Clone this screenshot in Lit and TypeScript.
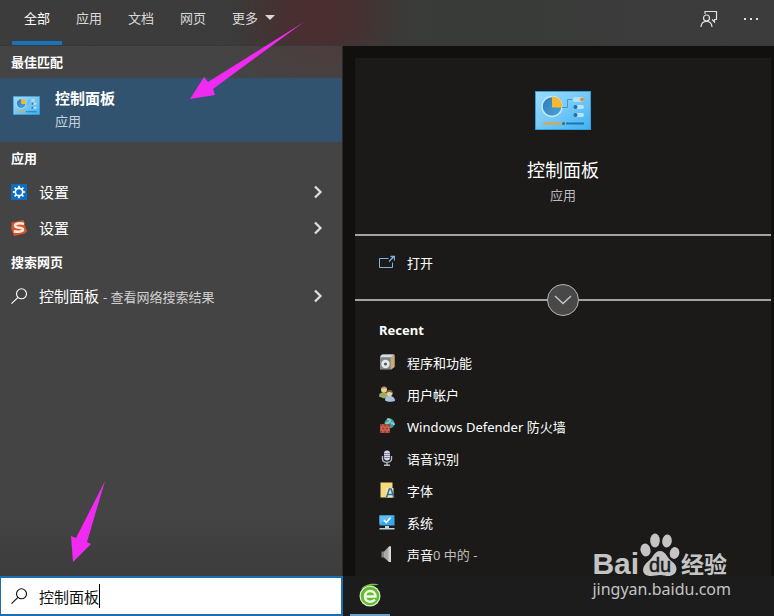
import { LitElement, html, css, svg } from "lit";
import { customElement, state } from "lit/decorators.js";

const panelIcon = svg`
  <defs>
    <linearGradient id="screen" x1="0" y1="0" x2="1" y2="1">
      <stop offset="0" stop-color="#9adcfb"/><stop offset="0.4" stop-color="#7fcdf8"/><stop offset="1" stop-color="#3fb2ef"/>
    </linearGradient>
    <linearGradient id="pie" x1="0" y1="0" x2="1" y2="1">
      <stop offset="0" stop-color="#2b7cb4"/><stop offset="1" stop-color="#4ea3dc"/>
    </linearGradient>
  </defs>
  <rect x="0.5" y="0.5" width="55" height="38" fill="url(#screen)" stroke="#2f9fe0"/>
  <circle cx="17" cy="15.5" r="10" fill="url(#pie)" stroke="#c6ebfc" stroke-width="1.4"/>
  <path d="M17 5.500A10.500 10.500 0 0 1 27.500 16.500H17z" fill="#f7b731"/>
  <path d="M27 16.500h5.500V8.500H37" fill="none" stroke="#3a9fd0" stroke-width="1"/>
  <rect x="38" y="6" width="11" height="5" rx="2" fill="#b5dff4"/><circle cx="47" cy="8.500" r="2" fill="#e08a4a"/>
  <rect x="39" y="14" width="10" height="4" rx="2" fill="#b5e3f8"/><circle cx="40.500" cy="16" r="2" fill="#1c6fa8"/>
  <rect x="39" y="22" width="10" height="4" rx="2" fill="#b5e3f8"/><circle cx="40.500" cy="24" r="2" fill="#1c6fa8"/>
  <path d="M8 32.500h19" stroke="#e8a33a" stroke-width="2"/>
  <path d="M31 32.500h18" stroke="#1c74b8" stroke-width="2"/>
  <circle cx="28.500" cy="32.500" r="1.500" fill="#1c6fa8"/>`;

const settingsIcon = svg`
  <rect width="16" height="16" fill="#0a70c4"/>
  <g stroke="#fff" stroke-width="1.700" fill="none">
    <circle cx="8" cy="8" r="3.700"/>
    <path d="M8 1.800v2.500M8 11.700v2.500M1.800 8h2.500M11.700 8h2.500M3.600 3.600l1.800 1.800M10.600 10.600l1.800 1.800M12.400 3.600l-1.800 1.800M5.400 10.600l-1.800 1.800"/>
  </g>`;

const sogouIcon = svg`
  <path d="M0.500 2.500L12.500 0L13.500 4L16 11.500L13.500 13.500L3 16L0.300 9z" fill="#d9532c"/>
  <path d="M13 4C9 2.600 3.800 3.200 4 6C4.200 8.600 12 7 12 9.400C12 11.600 7 12.200 2.800 11.200" fill="none" stroke="#ffe9dc" stroke-width="2.500"/>`;

const searchIcon = svg`
  <circle cx="10.500" cy="5.800" r="5" fill="none" stroke="currentColor" stroke-width="1.100"/>
  <path d="M7 9.400L0.500 15.600" stroke="currentColor" stroke-width="1.100"/>`;

const openIcon = svg`
  <path d="M9.500 3.500H0.500v9h13V7.500" fill="none" stroke="#7fb4e2"/>
  <path d="M10 6.500L14.800 1.800M11.500 1.500h4v4" fill="none" stroke="#7fb4e2" stroke-width="1.300"/>`;

const chevron = svg`<path d="M2 1.500L7.500 7L2 12.500" fill="none" stroke="#e0e0e0" stroke-width="2.200"/>`;

const recentIcons = {
  programs: svg`
    <path d="M1 2L3 0.500H15.500V13L12 15.500H1z" fill="#8f989a"/>
    <path d="M2 1.500L4 0.500H15L12 3H2z" fill="#d9dddb"/>
    <path d="M12 3L15.500 1V13L12 15.500z" fill="#d0a772"/>
    <rect x="1.500" y="4" width="10" height="11" fill="#7d888b"/>
    <circle cx="6.500" cy="10" r="4.200" fill="#e6eaea"/><circle cx="6.500" cy="10" r="1.500" fill="#4c5659"/>`,
  users: svg`
    <path d="M0 10.500C0 7 2 6.500 4.500 6.500S9 7.500 9 11L5 12.500z" fill="#9aab62"/>
    <circle cx="5" cy="3.800" r="3" fill="#e8cf96"/><path d="M2 3.500C2 -0.500 8 -0.500 8 3C6 2 4 2 2 3.500" fill="#b29555"/>
    <path d="M6 14.500C6 10.500 8 10 10.800 10S16 11.500 16 15C13 16.300 8.500 16 6 14.500" fill="#a9bfdf"/>
    <circle cx="10.500" cy="7.200" r="3" fill="#ead2a0"/><path d="M7.500 7C7.500 3 13.500 3 13.500 7C11 5.500 9.500 5.500 7.500 7" fill="#7a5c35"/>`,
  firewall: svg`
    <circle cx="10.500" cy="5.500" r="5" fill="#3c94c8"/>
    <path d="M8 1.500C11 0.500 12 2.500 10.500 4S7.500 5.500 6.500 5M12 5.500c2-1 3 0 3 1.500" stroke="#8fd29a" stroke-width="2" fill="none"/>
    <rect x="1" y="6" width="10" height="9" fill="#a63f2e"/>
    <path d="M1 9h10M1 12h10M4 6v3M8 6v3M2.500 9v3M6 9v3M9.500 9v3M4 12v3M8 12v3" stroke="#d9917f" stroke-width="0.600"/>`,
  speech: svg`
    <rect x="5" y="0.500" width="6" height="10" rx="3" fill="#d3d7e6"/>
    <path d="M5 3.500h6M5 5.500h6M5 7.500h6" stroke="#6a708c" stroke-width="0.800"/>
    <path d="M3.500 6V9C3.500 13.500 12.500 13.500 12.500 9V6M8 12.500V15M5 15.200h6" fill="none" stroke="#b4bacd" stroke-width="1.400"/>`,
  fonts: svg`
    <path d="M1.500 0.500h12v15h-12z" fill="#f5d97c"/><path d="M7 6h7.500v9.500H7z" fill="#f3e7b6"/>
    <path d="M7.500 15.500L10.300 7h1.800L15 15.500M8.700 12.500h5" fill="none" stroke="#2d6f9e" stroke-width="1.600"/>`,
  system: svg`
    <rect x="0.500" y="1.500" width="15" height="10" fill="#38a6ea"/><path d="M0.500 1.500H15.500L0.500 10z" fill="#5cbdf4"/>
    <path d="M5 6l2.300 2.500L11.500 3.800" fill="none" stroke="#fff" stroke-width="1.700"/>
    <path d="M6 12h4v2h5.500v1.500H0.500V14H6z" fill="#c4d2da"/>`,
  sound: svg`
    <path d="M2.500 5.500H5v6H2.500z" fill="#858585"/><path d="M5 5.500L10 0.500H12V16H10L5 11.500z" fill="#a9a9a9"/>
    <path d="M9.500 1L10.500 0.500H12V16H10.500L9.500 15.500z" fill="#d6d6d6"/>`,
};

@customElement("app-root")
export class AppRoot extends LitElement {
  @state() private tab = "全部";

  private tabs = ["全部", "应用", "文档", "网页"];
  private apps = [
    { name: "设置", icon: settingsIcon },
    { name: "设置", icon: sogouIcon },
  ];
  private recent = [
    { name: "程序和功能", icon: recentIcons.programs },
    { name: "用户帐户", icon: recentIcons.users },
    { name: "Windows Defender 防火墙", icon: recentIcons.firewall },
    { name: "语音识别", icon: recentIcons.speech },
    { name: "字体", icon: recentIcons.fonts },
    { name: "系统", icon: recentIcons.system },
    { name: "声音", note: "0 中的 -", icon: recentIcons.sound },
  ];

  static styles = css`
    :host {
      display: flex;
      flex-direction: column;
      position: relative;
      min-height: 100vh;
      overflow: hidden;
      background: #11100f;
      color: #fff;
      font: 13px/20px "Noto Sans", "Noto Sans CJK SC", sans-serif;
    }
    * { box-sizing: border-box; }
    button {
      margin: 0;
      padding: 0;
      border: 0;
      background: none;
      color: inherit;
      font: inherit;
      text-align: left;
    }
    h1, h2, p, ul { margin: 0; padding: 0; font-size: 13px; list-style: none; }
    svg { display: block; flex: none; }
    header {
      display: flex;
      justify-content: space-between;
      height: 46px;
      padding: 0 15px 0 12px;
      border-bottom: 1px solid #383838;
      background: radial-gradient(ellipse 90px 90px at 318px 12px, #4c2e2f, #482f30 35%, transparent), linear-gradient(90deg, #3c3c3c, #393b39 65%, #3c3c3c);
    }
    nav { display: flex; gap: 2px; }
    .tab {
      width: 50px;
      padding: 0 0 6px;
      border-bottom: 4px solid transparent;
      color: #d8d8d8;
      text-align: center;
    }
    .tab.on { border-color: #1a72b9; color: #fff; }
    .more { display: flex; align-items: center; gap: 7px; width: auto; padding-left: 12px; }
    .tools { display: flex; align-items: center; gap: 25px; padding-bottom: 7px; }
    main { display: grid; grid-template-columns: 343px 1fr; flex: 1; }
    .results {
      border-right: 1px solid #2c2a29;
      background: radial-gradient(ellipse 120px 50px at 330px 0, #4d3c3d, transparent), linear-gradient(#444 88%, #3c3c3c);
    }
    .results h2 { padding: 6px 11px; height: 32px; }
    .best {
      display: flex;
      gap: 15px;
      width: 100%;
      height: 64px;
      padding: 9px 13px;
      background: #31536f;
    }
    .best svg { margin-top: 9px; }
    .best strong { display: block; font-size: 15px; line-height: 22px; }
    .best span span { display: block; line-height: 24px; color: #c8d3dc; }
    .row {
      display: flex;
      align-items: center;
      gap: 12px;
      width: 100%;
      height: 36px;
      padding: 0 19px 0 11px;
      font-size: 15px;
    }
    .row .name { flex: 1; }
    .row small { font-size: 13px; color: #cfcfcf; }
    .preview { padding: 12px 3px 0 12px; }
    .card { height: 100%; background: #1b1a19; }
    .hero {
      display: flex;
      flex-direction: column;
      align-items: center;
      height: 178px;
      padding-top: 33px;
      border-bottom: 2px solid #a3a3a3;
    }
    .hero h1 { margin-top: 27px; font-size: 18px; font-weight: 400; line-height: 26px; }
    .hero p { color: #b9b9b9; line-height: 24px; }
    .actions {
      position: relative;
      height: 65px;
      padding: 17px 24px;
      border-bottom: 2px solid #a3a3a3;
    }
    .line { display: flex; align-items: center; gap: 12px; height: 20px; }
    .expand {
      position: absolute;
      left: calc(50% - 16px);
      bottom: -17px;
      display: grid;
      place-items: center;
      width: 32px;
      height: 32px;
      border: 1px solid #b5b5b5;
      border-radius: 50%;
      background: #484848;
    }
    .recent { padding: 19px 24px 0; }
    .recent ul { padding-top: 7px; }
    .recent .line { width: 100%; height: 32px; }
    .recent .line svg { margin-bottom: 3px; }
    .note { color: #c0bdb8; }
    footer { display: grid; grid-template-columns: 343px 1fr; height: 40px; background: #1c1c1c; }
    .search {
      display: flex;
      align-items: center;
      gap: 12px;
      padding: 0 10px;
      border: 2px solid #1b6fae;
      border-left-width: 1px;
      background: #fff;
      color: #111;
    }
    .field { display: flex; align-items: center; }
    .search input {
      width: 60px;
      height: 24px;
      padding: 0;
      border: 0;
      outline: 0;
      background: none;
      color: #111;
      font: inherit;
      font-size: 15px;
    }
    .caret { width: 1px; height: 24px; background: #000; }
    .browser { display: flex; flex-direction: column; align-items: center; justify-content: space-between; width: 40px; margin-left: 7px; padding-top: 7px; }
    .browser i { width: 40px; height: 2px; background: #6e9cc8; }
    .arrow { position: absolute; fill: #f02af0; }
    .first { left: 190px; top: 22px; }
    .second { left: 70px; bottom: 53px; }
    .mark { position: absolute; right: 43px; bottom: 15px; color: #c4c4c4; }
    .brand { display: flex; align-items: flex-end; height: 44px; font-weight: 700; }
    .bai { font: 700 30px/26px "Liberation Sans", sans-serif; }
    .jingyan { font-size: 23px; line-height: 26px; }
    .url { display: block; font-size: 16px; line-height: 24px; }
    .du { font: 20px "Liberation Sans", sans-serif; fill: #1c1b1a; stroke: #1c1b1a; stroke-width: 0.5; }
  `;

  render() {
    return html`
      <header>
        <nav>
          ${this.tabs.map(
            (t) => html`<button class="tab ${t === this.tab ? "on" : ""}" @click=${() => (this.tab = t)}>${t}</button>`
          )}
          <button class="tab more">更多
            <svg width="10" height="5" viewBox="0 0 10 5"><path d="M0 0h10L5 5z" fill="#d8d8d8"/></svg>
          </button>
        </nav>
        <div class="tools">
          <button aria-label="反馈">
            <svg width="18" height="18" viewBox="0 0 18 18" fill="none" stroke="#e0e0e0" stroke-width="1.200">
              <path d="M5 4V1.500h11.500v8H14.500v2.500L12 9.500"/>
              <circle cx="6.500" cy="8" r="3"/><path d="M1 17C1.500 9.500 11.500 9.500 12 17"/>
            </svg>
          </button>
          <button aria-label="选项">
            <svg width="16" height="4" viewBox="0 0 16 4" fill="#e0e0e0"><path d="M1 1h2v2H1zM7 1h2v2H7zM13 1h2v2h-2z"/></svg>
          </button>
        </div>
      </header>
      <main>
        <section class="results">
          <h2>最佳匹配</h2>
          <button class="best">
            <svg width="27" height="19" viewBox="0 0 56 39">${panelIcon}</svg>
            <span><strong>控制面板</strong><span>应用</span></span>
          </button>
          <h2>应用</h2>
          ${this.apps.map(
            (a) => html`<button class="row">
              <svg width="16" height="16" viewBox="0 0 16 16">${a.icon}</svg>
              <span class="name">${a.name}</span>
              <svg width="10" height="14" viewBox="0 0 10 14">${chevron}</svg>
            </button>`
          )}
          <h2>搜索网页</h2>
          <button class="row">
            <svg width="16" height="16" viewBox="0 0 16 16">${searchIcon}</svg>
            <span class="name">控制面板 <small>- 查看网络搜索结果</small></span>
            <svg width="10" height="14" viewBox="0 0 10 14">${chevron}</svg>
          </button>
        </section>
        <section class="preview">
          <div class="card">
            <div class="hero">
              <svg width="56" height="39" viewBox="0 0 56 39">${panelIcon}</svg>
              <h1>控制面板</h1>
              <p>应用</p>
            </div>
            <div class="actions">
              <button class="line"><svg width="16" height="16" viewBox="0 0 16 16">${openIcon}</svg>打开</button>
              <button class="expand" aria-label="展开">
                <svg width="18" height="10" viewBox="0 0 18 10"><path d="M1 1l8 7.500L17 1" fill="none" stroke="#c8c8c8" stroke-width="1.300"/></svg>
              </button>
            </div>
            <div class="recent">
              <h2>Recent</h2>
              <ul>
                ${this.recent.map(
                  (r) => html`<li><button class="line">
                    <svg width="16" height="16" viewBox="0 0 16 16">${r.icon}</svg>
                    <span>${r.name}${r.note ? html`<span class="note">${r.note}</span>` : ""}</span>
                  </button></li>`
                )}
              </ul>
            </div>
          </div>
        </section>
      </main>
      <footer>
        <label class="search">
          <svg width="16" height="16" viewBox="0 0 16 16">${searchIcon}</svg>
          <span class="field"><input aria-label="搜索" .value=${"控制面板"} /><span class="caret"></span></span>
        </label>
        <button class="browser" aria-label="浏览器">
          <svg width="24" height="24" viewBox="0 0 24 24">
            <circle cx="12" cy="13" r="10.500" fill="#e2f5cf"/><circle cx="12" cy="13" r="9.300" fill="#62bb33"/>
            <path d="M7 13.500h10.500C17.500 6 7 6.500 7 13.500C7 19.500 14 20 17 16.500" fill="none" stroke="#f4fbe9" stroke-width="2.400"/>
            <path d="M3 6C8 0 17 0 21 2C14 2 8 3 3 6" fill="#7cc243"/>
          </svg>
          <i></i>
        </button>
      </footer>
      <svg class="arrow first" width="114" height="78" viewBox="0 0 114 78"><path d="M0 77L14 55L18 60L114 0L23 67L25 73z"/></svg>
      <svg class="arrow second" width="36" height="82" viewBox="0 0 36 82"><path d="M3 81L1 55L6 57L35 0L17 61L21 63z"/></svg>
      <div class="mark">
        <div class="brand">
          <span class="bai">Bai</span>
          <svg width="42" height="44" viewBox="-1 0 42 44" fill="currentColor">
            <ellipse cx="5.500" cy="17" rx="5" ry="6.500" transform="rotate(-12 5.500 17)"/>
            <ellipse cx="15" cy="7.500" rx="4.800" ry="6.900"/>
            <ellipse cx="27" cy="8" rx="4.800" ry="6.500" transform="rotate(8 27 8)"/>
            <ellipse cx="34.500" cy="20" rx="4.800" ry="6" transform="rotate(12 34.500 20)"/>
            <path d="M20 18C26 18 27 25 32 28.500C39 33 38 43 28 43C24 43 23 42 20 42S15 43 11 43C1 43 1 34 8 28.500C13 25 14 18 20 18z"/>
            <text class="du" x="9" y="39">du</text>
          </svg>
          <span class="jingyan">经验</span>
        </div>
        <span class="url">jingyan.baidu.com</span>
      </div>
    `;
  }
}
